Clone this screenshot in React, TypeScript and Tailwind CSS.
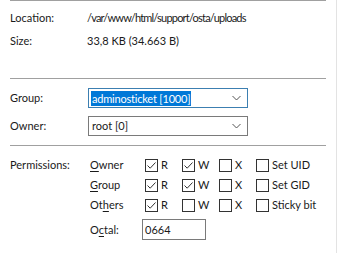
const font = "font-['Lato','Noto_Sans',sans-serif]";

function Sep() {
  return <div className="mx-[10px] h-px bg-[#a0a0a0]" />;
}

function Check({ checked }: { checked: boolean }) {
  return (
    <span className="flex h-[13px] w-[13px] shrink-0 items-center justify-center border border-[#333] bg-white">
      {checked && (
        <svg width="11" height="11" viewBox="0 0 11 11">
          <path d="M1.5 5.5 L4.2 8.2 L9.5 2.5" fill="none" stroke="#333" strokeWidth="1" />
        </svg>
      )}
    </span>
  );
}

function Box({ checked, label, w }: { checked: boolean; label: string; w: string }) {
  return (
    <label className={`flex items-center gap-[3px] ${w}`}>
      <Check checked={checked} />
      <span>{label}</span>
    </label>
  );
}

function Chevron() {
  return (
    <svg width="9" height="6" viewBox="0 0 9 6" className="mr-[6px]">
      <path d="M0.5 1 L4.5 5 L8.5 1" fill="none" stroke="#555" strokeWidth="1" />
    </svg>
  );
}

const perms = [
  { who: "Owner", key: "O", rest: "wner", pre: "", r: true, w: true, x: false, extra: "Set UID" },
  { who: "Group", key: "G", rest: "roup", pre: "", r: true, w: true, x: false, extra: "Set GID" },
  { who: "Others", key: "h", rest: "ers", pre: "Ot", r: true, w: false, x: false, extra: "Sticky bit" },
];

export default function App() {
  return (
    <div className={`flex h-[253px] w-[348px] bg-white text-[11px] leading-[16px] text-[#1a1a1a] ${font}`}>
      <div className="w-[337px] border-r border-[#e3e3e3]">
        <Sep />

        <div className="mt-[9px] flex flex-col gap-[7px] px-[10px]">
          <div className="flex">
            <span className="w-[77px]">Location:</span>
            <span className="tracking-[-0.8px]">/var/www/html/support/osta/uploads</span>
          </div>
          <div className="flex">
            <span className="w-[77px]">Size:</span>
            <span>33,8 KB (34.663 B)</span>
          </div>
        </div>

        <div className="mt-[29px]">
          <Sep />
        </div>

        <div className="mt-[9px] flex flex-col gap-[8px] px-[10px]">
          <div className="flex items-center">
            <span className="w-[78px]">Group:</span>
            <div className="flex h-[20px] w-[160px] items-center justify-between border border-[#3c7fb1] bg-white pl-[2px]">
              <span className="bg-[#0078d7] px-[1px] leading-[15px] tracking-[-0.2px] text-white">adminosticket [1000]</span>
              <Chevron />
            </div>
          </div>
          <div className="flex items-center">
            <span className="w-[78px]">Owner:</span>
            <div className="flex h-[20px] w-[160px] items-center justify-between border border-[#7a7a7a] bg-white pl-[3px]">
              <span>root [0]</span>
              <Chevron />
            </div>
          </div>
        </div>

        <div className="mt-[9px]">
          <Sep />
        </div>

        <div className="mt-[11px] flex px-[10px]">
          <span className="w-[80px]">Permissions:</span>
          <div className="flex flex-col gap-[4px]">
            {perms.map((p) => (
              <div key={p.who} className="flex h-[16px] items-center">
                <span className="w-[55px]">
                  {p.pre}
                  <span className="underline underline-offset-2">{p.key}</span>
                  {p.rest}
                </span>
                <Box checked={p.r} label="R" w="w-[37px]" />
                <Box checked={p.w} label="W" w="w-[37px]" />
                <Box checked={p.x} label="X" w="w-[37px]" />
                <Box checked={false} label={p.extra} w="" />
              </div>
            ))}
            <div className="mt-[2px] flex items-center">
              <span className="w-[52px]">
                O<span className="underline underline-offset-2">c</span>tal:
              </span>
              <div className="flex h-[21px] w-[64px] items-center border border-[#7a7a7a] pl-[2px]">0664</div>
            </div>
          </div>
        </div>
      </div>
    </div>
  );
}
